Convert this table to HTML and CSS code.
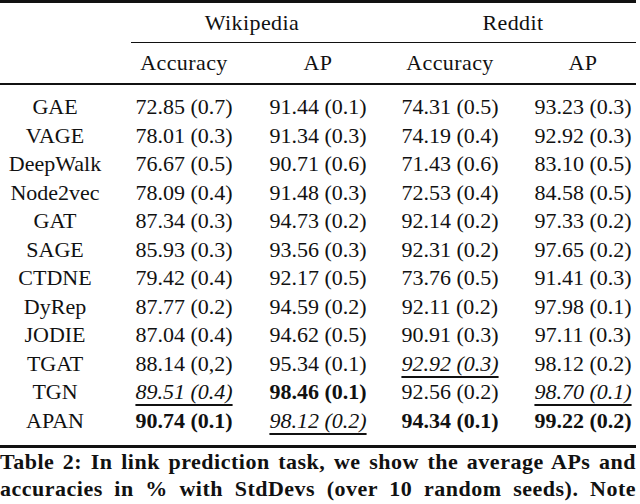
FILE: index.html
```html
<!DOCTYPE html>
<html lang="en">
<head>
<meta charset="utf-8">
<link rel="stylesheet" href="styles.css">
</head>
<body>
<div class="table">
  <div class="rule rule-top"></div>
  <div class="row head1">
    <div class="cell c1"></div>
    <div class="cell group wiki">Wikipedia</div>
    <div class="cell group reddit">Reddit</div>
  </div>
  <div class="rule rule-cmid"></div>
  <div class="row head2">
    <div class="cell c1"></div>
    <div class="cell c2">Accuracy</div>
    <div class="cell c3">AP</div>
    <div class="cell c4">Accuracy</div>
    <div class="cell c5">AP</div>
  </div>
  <div class="rule rule-mid"></div>
  <div class="body">
    <div class="row"><div class="cell c1">GAE</div><div class="cell c2">72.85 (0.7)</div><div class="cell c3">91.44 (0.1)</div><div class="cell c4">74.31 (0.5)</div><div class="cell c5">93.23 (0.3)</div></div>
    <div class="row"><div class="cell c1">VAGE</div><div class="cell c2">78.01 (0.3)</div><div class="cell c3">91.34 (0.3)</div><div class="cell c4">74.19 (0.4)</div><div class="cell c5">92.92 (0.3)</div></div>
    <div class="row"><div class="cell c1">DeepWalk</div><div class="cell c2">76.67 (0.5)</div><div class="cell c3">90.71 (0.6)</div><div class="cell c4">71.43 (0.6)</div><div class="cell c5">83.10 (0.5)</div></div>
    <div class="row"><div class="cell c1">Node2vec</div><div class="cell c2">78.09 (0.4)</div><div class="cell c3">91.48 (0.3)</div><div class="cell c4">72.53 (0.4)</div><div class="cell c5">84.58 (0.5)</div></div>
    <div class="row"><div class="cell c1">GAT</div><div class="cell c2">87.34 (0.3)</div><div class="cell c3">94.73 (0.2)</div><div class="cell c4">92.14 (0.2)</div><div class="cell c5">97.33 (0.2)</div></div>
    <div class="row"><div class="cell c1">SAGE</div><div class="cell c2">85.93 (0.3)</div><div class="cell c3">93.56 (0.3)</div><div class="cell c4">92.31 (0.2)</div><div class="cell c5">97.65 (0.2)</div></div>
    <div class="row"><div class="cell c1">CTDNE</div><div class="cell c2">79.42 (0.4)</div><div class="cell c3">92.17 (0.5)</div><div class="cell c4">73.76 (0.5)</div><div class="cell c5">91.41 (0.3)</div></div>
    <div class="row"><div class="cell c1">DyRep</div><div class="cell c2">87.77 (0.2)</div><div class="cell c3">94.59 (0.2)</div><div class="cell c4">92.11 (0.2)</div><div class="cell c5">97.98 (0.1)</div></div>
    <div class="row"><div class="cell c1">JODIE</div><div class="cell c2">87.04 (0.4)</div><div class="cell c3">94.62 (0.5)</div><div class="cell c4">90.91 (0.3)</div><div class="cell c5">97.11 (0.3)</div></div>
    <div class="row"><div class="cell c1">TGAT</div><div class="cell c2">88.14 (0,2)</div><div class="cell c3">95.34 (0.1)</div><div class="cell c4"><span class="second">92.92 (0.3)</span></div><div class="cell c5">98.12 (0.2)</div></div>
    <div class="row"><div class="cell c1">TGN</div><div class="cell c2"><span class="second">89.51 (0.4)</span></div><div class="cell c3"><span class="best">98.46 (0.1)</span></div><div class="cell c4">92.56 (0.2)</div><div class="cell c5"><span class="second">98.70 (0.1)</span></div></div>
    <div class="row"><div class="cell c1">APAN</div><div class="cell c2"><span class="best">90.74 (0.1)</span></div><div class="cell c3"><span class="second">98.12 (0.2)</span></div><div class="cell c4"><span class="best">94.34 (0.1)</span></div><div class="cell c5"><span class="best">99.22 (0.2)</span></div></div>
  </div>
  <div class="rule rule-bottom"></div>
</div>
<p class="caption"><span class="line">Table 2: In link prediction task, we show the average APs and</span><span class="line">accuracies in % with StdDevs (over 10 random seeds). Note</span></p>
</body>
</html>
```

FILE: styles.css
```css
html, body {
  margin: 0;
  padding: 0;
  background: #ffffff;
}

body {
  width: 640px;
  height: 504px;
  overflow: hidden;
  font-family: "Liberation Serif", "DejaVu Serif", serif;
  font-size: 22px;
  color: #111111;
}

.table {
  width: 636px;
}

.rule {
  background: #111111;
}

.rule-top {
  height: 3px;
  width: 636px;
}

.rule-cmid {
  height: 1px;
  margin-left: 131px;
  width: 505px;
}

.rule-mid {
  height: 2px;
  width: 636px;
}

.rule-bottom {
  height: 3px;
  width: 636px;
}

.row {
  display: flex;
  white-space: nowrap;
}

.head1 {
  height: 39px;
  align-items: center;
}

.head2 {
  height: 40px;
  align-items: center;
}

.body {
  padding: 8px 0 10px;
}

.body .row {
  height: 28.5px;
  align-items: center;
}

.cell {
  flex: none;
  text-align: center;
  line-height: 26px;
}

.c1 { width: 110px; }
.c2 { width: 148px; }
.c3 { width: 120px; }
.c4 { width: 144px; }
.c5 { width: 122px; }

.head2 .cell {
  letter-spacing: 0.4px;
}

.wiki {
  width: 268px;
  padding-left: 16px;
  box-sizing: border-box;
  letter-spacing: 0.4px;
}

.reddit {
  width: 266px;
  padding-left: 4px;
  box-sizing: border-box;
  letter-spacing: 0.4px;
}

.best {
  font-weight: bold;
}

.second {
  font-style: italic;
  text-decoration: underline;
  text-decoration-thickness: 1.5px;
  text-underline-offset: 5px;
}

.caption {
  margin: 0;
  width: 636px;
  font-weight: bold;
  line-height: 27px;
  letter-spacing: 0.5px;
}

.caption .line {
  display: block;
  text-align: justify;
  text-align-last: justify;
  white-space: nowrap;
}
```
